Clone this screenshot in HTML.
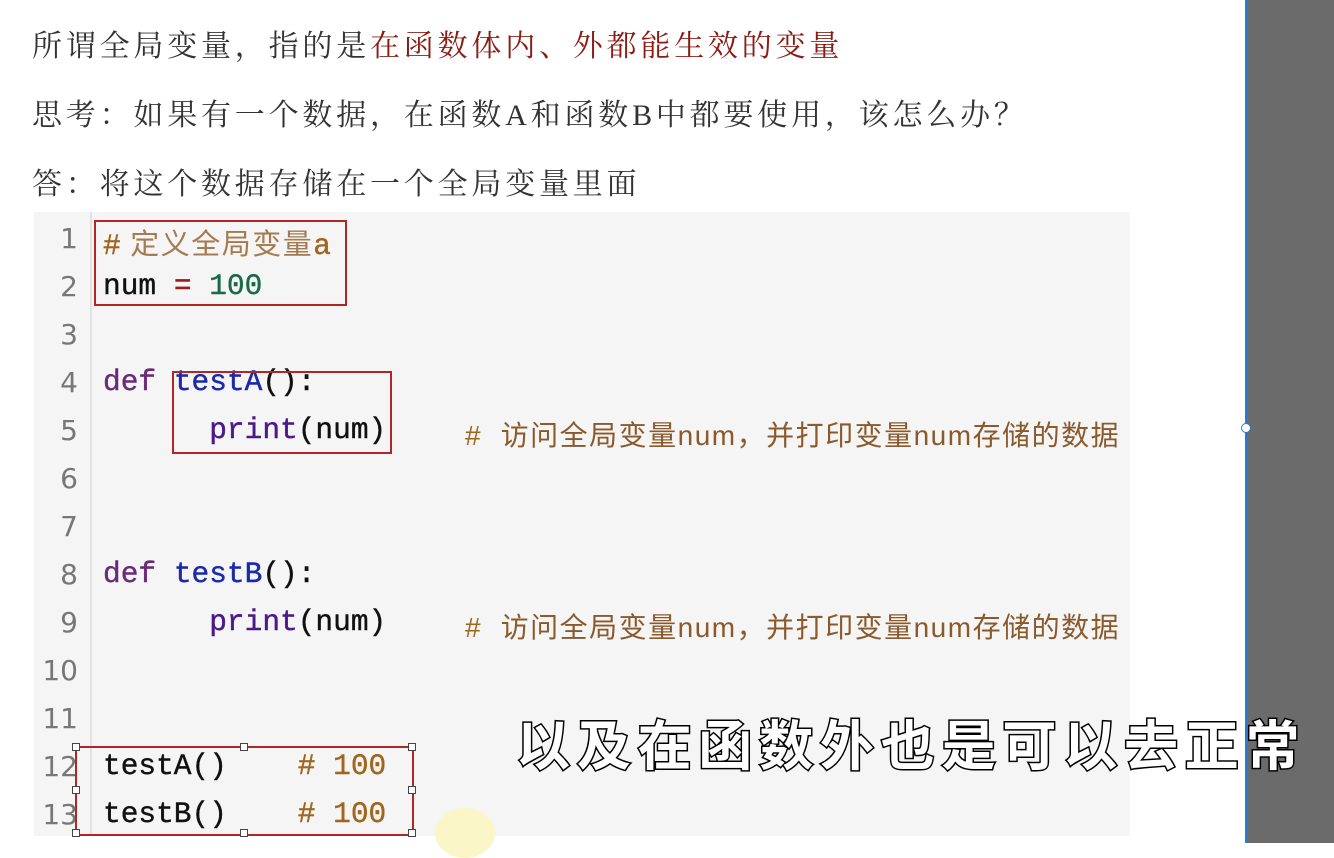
<!DOCTYPE html>
<html><head><meta charset="utf-8"><style>
body{margin:0;width:1334px;height:843px;background:#fff;position:relative;overflow:hidden;font-family:"Liberation Sans","Noto Sans CJK SC",sans-serif}
.t{position:absolute;left:32px;font-size:30px;letter-spacing:3.8px;color:#333;white-space:nowrap;font-family:"Liberation Serif","Noto Serif CJK SC",serif}
.r{color:#8b1c14}
.code{position:absolute;left:34px;top:212px;width:1096px;height:624px;background:#f5f5f5}
.gut{position:absolute;left:90px;top:212px;width:2px;height:624px;background:#e2e2e2}
.ln{position:absolute;width:44px;left:34px;text-align:right;font-family:"DejaVu Sans",sans-serif;font-size:28px;color:#777}
.cl{position:absolute;left:103px;font-family:"Liberation Mono","Noto Sans CJK SC",monospace;font-size:29.5px;color:#111;white-space:pre;-webkit-text-stroke:0.4px currentColor}
.cm{color:#a0651e}
.cc{position:absolute;left:465px;font-family:"Liberation Sans","Noto Sans CJK SC",sans-serif;font-size:28px;color:#8a5a2c;white-space:pre;letter-spacing:1.5px}
.box{position:absolute;border:2px solid #b32626}
.kw{color:#6a2a7a}.fn{color:#1a2aa8}.nm{color:#1a6a4a}.op{color:#9a1c1c}
.h{position:absolute;width:6px;height:6px;border:1px solid #444;background:#fff}
</style></head><body>
<div class="t" style="top:21px">所谓全局变量，指的是<span class="r">在函数体内、外都能生效的变量</span></div>
<div class="t" style="top:90px">思考：如果有一个数据，在函数A和函数B中都要使用，该怎么办？</div>
<div class="t" style="top:159px">答：将这个数据存储在一个全局变量里面</div>
<div class="code"></div><div class="gut"></div>
<div class="ln" style="top:222px">1</div><div class="ln" style="top:270px">2</div><div class="ln" style="top:318px">3</div><div class="ln" style="top:366px">4</div><div class="ln" style="top:414px">5</div><div class="ln" style="top:462px">6</div><div class="ln" style="top:510px">7</div><div class="ln" style="top:558px">8</div><div class="ln" style="top:606px">9</div><div class="ln" style="top:654px">10</div><div class="ln" style="top:702px">11</div><div class="ln" style="top:750px">12</div><div class="ln" style="top:798px">13</div>
<div class="cl" style="top:221px"><span class="cm">#</span><span class="cm" style="font-family:'Liberation Sans','Noto Sans CJK SC',sans-serif;font-size:29px;letter-spacing:1.5px;color:#a57a50;-webkit-text-stroke:0"> 定义全局变量</span><span class="cm">a</span></div>
<div class="cl" style="top:269px">num <span class="op">=</span> <span class="nm">100</span></div>
<div class="cl" style="top:365px"><span class="kw">def</span> <span class="fn">testA</span>():</div>
<div class="cl" style="top:413px">      <span class="kw" style="color:#4a1a8a">print</span>(num)</div>
<div class="cc" style="top:414px"><span style="color:#a0651e">#</span>  访问全局变量num，并打印变量num存储的数据</div>
<div class="cl" style="top:557px"><span class="kw">def</span> <span class="fn">testB</span>():</div>
<div class="cl" style="top:605px">      <span class="kw" style="color:#4a1a8a">print</span>(num)</div>
<div class="cc" style="top:606px"><span style="color:#a0651e">#</span>  访问全局变量num，并打印变量num存储的数据</div>
<div class="cl" style="top:749px">testA()    <span class="cm">#</span> <span class="cm">100</span></div>
<div class="cl" style="top:797px">testB()    <span class="cm">#</span> <span class="cm">100</span></div>
<div class="box" style="left:94px;top:220px;width:249px;height:82px"></div>
<div class="box" style="left:172px;top:371px;width:216px;height:79px"></div>
<div class="box" style="left:75px;top:746px;width:335px;height:86px"></div>
<div class="h" style="left:72px;top:743px"></div><div class="h" style="left:240px;top:743px"></div><div class="h" style="left:408px;top:743px"></div>
<div class="h" style="left:72px;top:786px"></div><div class="h" style="left:408px;top:786px"></div>
<div class="h" style="left:72px;top:829px"></div><div class="h" style="left:240px;top:829px"></div><div class="h" style="left:408px;top:829px"></div>
<div style="position:absolute;left:435px;top:808px;width:60px;height:50px;border-radius:50%;background:#fbf6c8"></div>
<div style="position:absolute;left:1245px;top:0;width:3px;height:843px;background:#2a7ad0"></div>
<div style="position:absolute;left:1248px;top:0;width:86px;height:843px;background:#6b6b6b"></div>
<div style="position:absolute;left:1241px;top:423px;width:8px;height:8px;border-radius:50%;background:#fff;border:1px solid #2a7ad0"></div>
<div style="position:absolute;left:516px;top:702px;font-size:54px;font-weight:bold;color:#fff;letter-spacing:6.8px;-webkit-text-stroke:3px #000;paint-order:stroke fill;font-family:'Noto Sans CJK SC',sans-serif;white-space:nowrap">以及在函数外也是可以去正常</div>
</body></html>
